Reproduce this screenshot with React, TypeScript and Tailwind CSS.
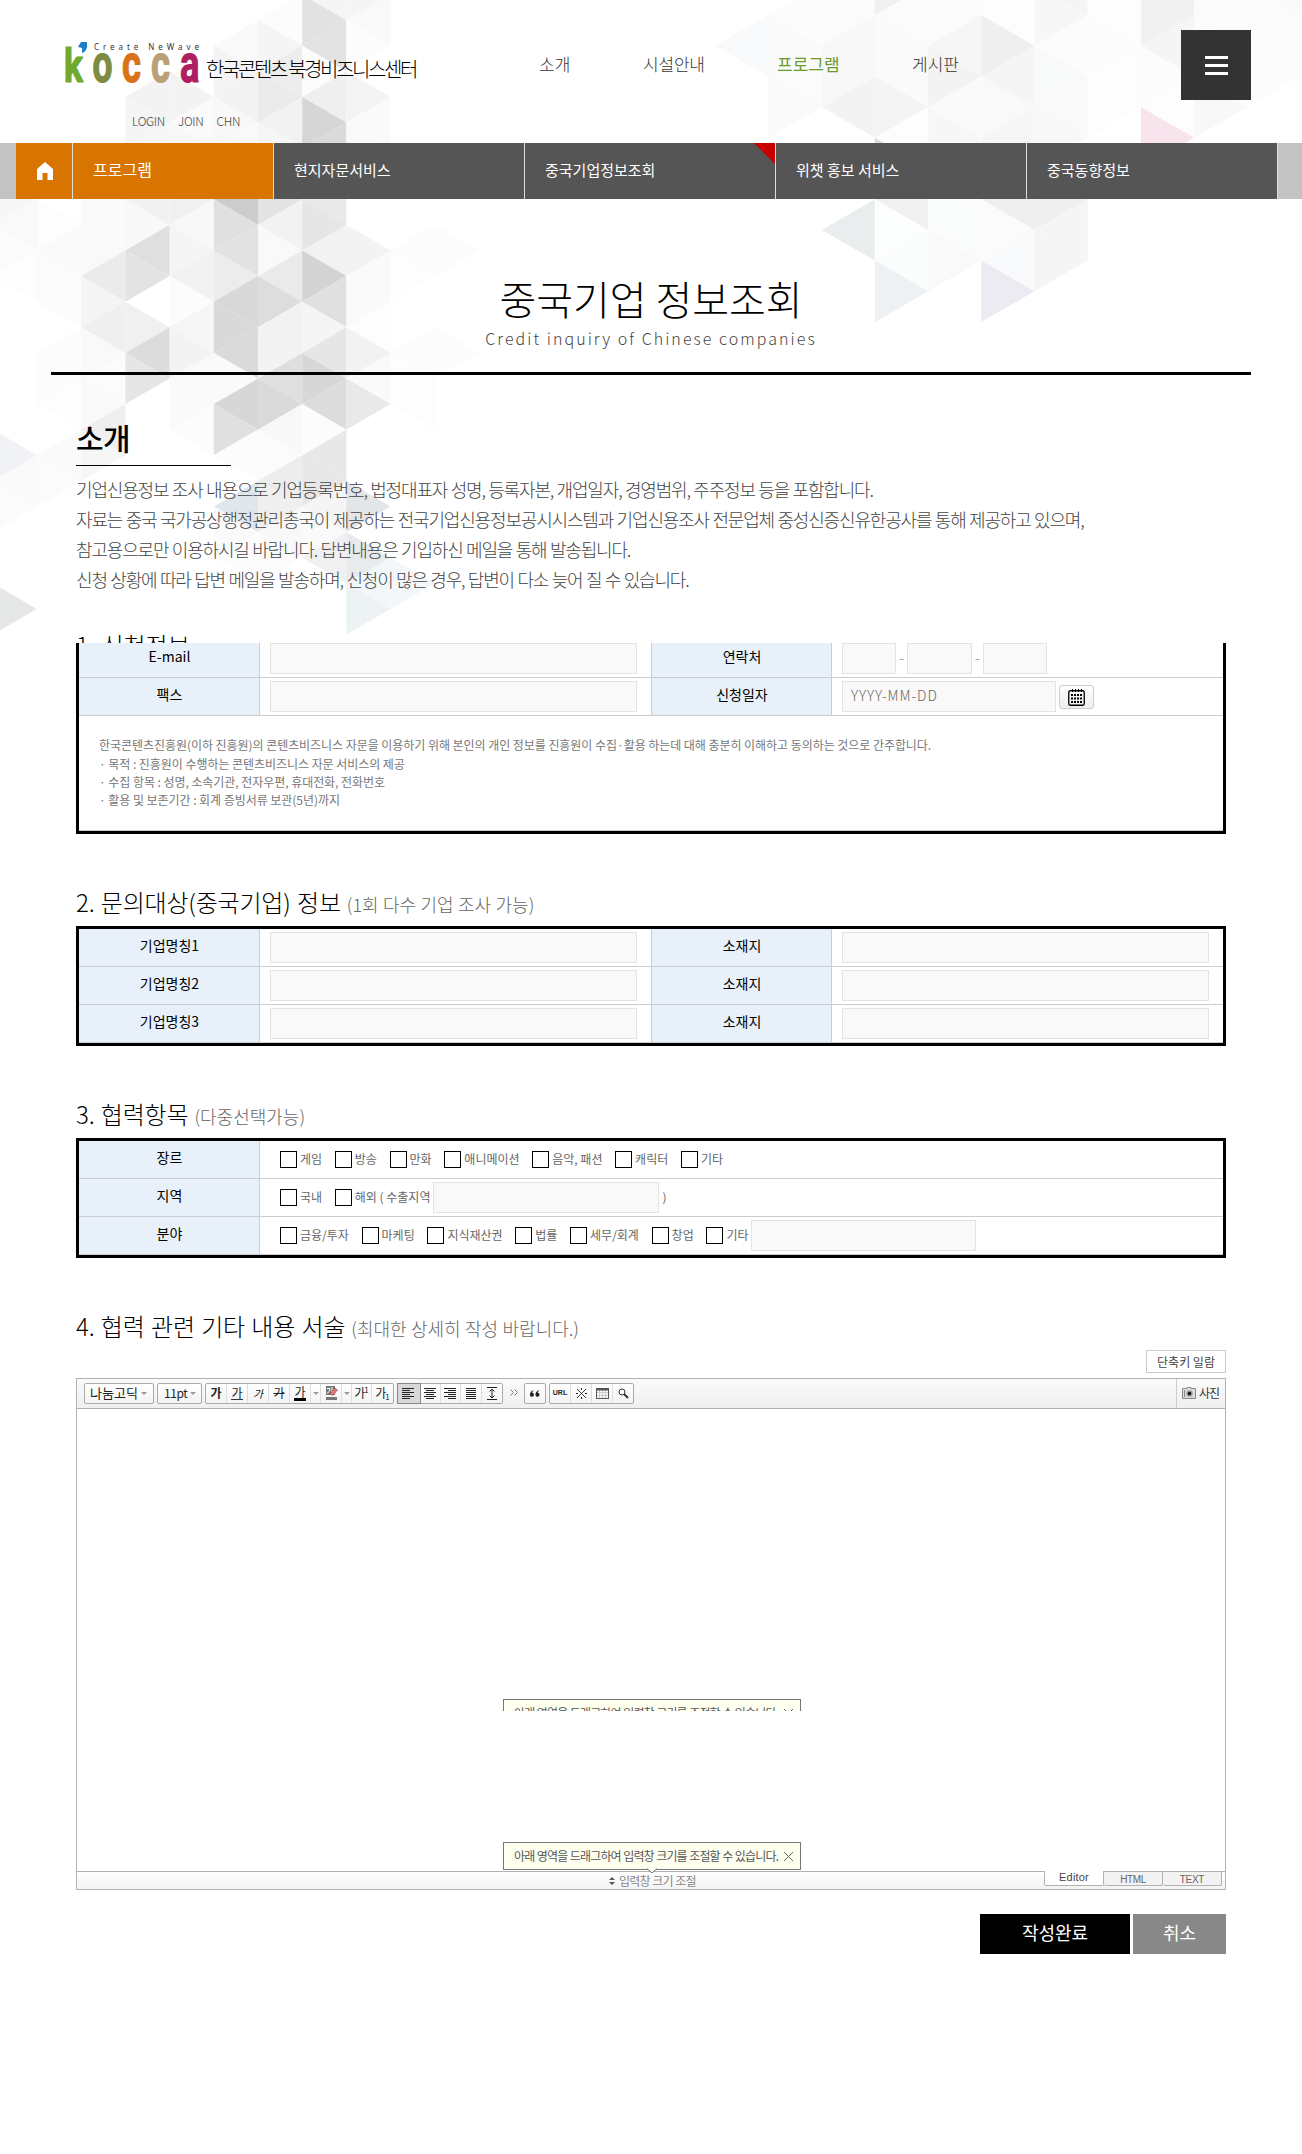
import React from "react";

type Tones = Record<number, Record<number, string>>;

const leftTones: Tones = {
  [-1]: { 6: "#f7f7f7", 7: "#f7f7f7", 8: "#f9f9f9", 9: "#fbfbfb", 10: "#fdfdfd", 17: "#f0f2f5", 18: "#fafafa", 19: "#fbfbfb", 23: "#e6e8e8" },
  0: { 8: "#fdfdfd", 9: "#fafafa", 10: "#fbfbfb", 11: "#fcfcfc", 13: "#fcfcfc", 14: "#fcfcfc", 15: "#fdfdfd", 17: "#fafafa", 18: "#fbfbfb" },
  1: { 7: "#f9f9f9", 8: "#fafafa", 9: "#f9f9f9", 10: "#ebebeb", 11: "#f4f4f4", 12: "#efefef", 13: "#f9f9f9", 14: "#fbfbfb", 15: "#f9f9f9", 16: "#efefef", 17: "#f6f6f6" },
  2: { 3: "#f3f3f3", 4: "#f5f5f5", 5: "#f7f7f7", 6: "#f4f4f4", 7: "#f1f1f1", 8: "#f8f8f8", 9: "#dfdfdf", 10: "#e3e3e3", 12: "#f0f0f0", 13: "#dcdcdc", 14: "#e6e6e6" },
  3: { 3: "#f3f3f3", 4: "#fafafa", 5: "#f8f8f8", 6: "#f4f4f4", 7: "#f0f0f0", 8: "#f8f8f8", 9: "#f5f5f5", 10: "#f2f2f2", 11: "#fcfcfc", 12: "#f6f6f6", 13: "#f3f3f3", 14: "#f9f9f9", 15: "#fafafa", 16: "#fcfcfc" },
  4: { 1: "#fafafa", 2: "#f4f4f4", 3: "#f3f3f3", 4: "#f8f8f8", 5: "#fafafa", 6: "#e8e8e8", 7: "#cccccc", 8: "#e0e0e0", 9: "#e2e2e2", 10: "#ececec", 11: "#d8d8d8", 12: "#d9d9d9", 13: "#dadada", 14: "#fafafa", 15: "#d7d7d7", 16: "#e0e0e0", 17: "#fcfcfc", 19: "#dfe6ec", 20: "#fafafa", 21: "#fcfcfc" },
  5: { 0: "#fcfcfc", 1: "#f5f5f5", 2: "#ededed", 3: "#ebebeb", 4: "#f2f2f2", 5: "#f6f6f6", 6: "#f3f3f3", 7: "#e3e3e3", 8: "#f2f2f2", 9: "#f9f9f9", 10: "#eaeaea", 11: "#dddddd", 12: "#f2f2f2", 13: "#f3f3f3", 14: "#dfdfdf", 15: "#dadada", 16: "#f8f8f8", 17: "#fbfbfb", 18: "#ededed", 19: "#efefef", 20: "#f8f8f8", 21: "#fbfbfb" },
  6: { [-1]: "#f5f5f5", 0: "#e2e2e2", 1: "#e3e3e3", 2: "#fcfcfc", 3: "#efefef", 4: "#d6d6d6", 5: "#dadada", 6: "#d9d9d9", 7: "#e9e9e9", 8: "#e6e6e6", 9: "#f2f2f2", 10: "#d3d3d3", 11: "#e0e0e0", 12: "#f5f5f5", 13: "#e6e6e6", 14: "#d7d7d7", 15: "#dcdcdc", 16: "#fcfcfc", 17: "#e8e8e8", 18: "#e7e7e7", 19: "#f5f5f5", 20: "#fafafa", 21: "#f0f0f0" },
  7: { [-1]: "#f5f5f5", 0: "#f9f9f9", 1: "#fcfcfc", 3: "#f4f4f4", 4: "#fafafa", 5: "#f9f9f9", 9: "#f3f3f3", 10: "#fafafa", 11: "#fafafa", 12: "#fdfdfd", 13: "#f2f2f2", 14: "#fafafa", 15: "#e9e9e9", 19: "#e4e5e6", 21: "#e9eaeb", 22: "#f2f7fa", 23: "#edf2f5" },
  8: { 9: "#fcfcfc", 10: "#fdfdfd", 13: "#fcfcfc", 14: "#fdfdfd", 15: "#fdfdfd", 22: "#f1f7fb" },
  9: { 9: "#fcfcfc", 13: "#fcfcfc" },
};

const rightTones: Tones = {
  [-1]: { 1: "#f8fafc" },
  0: { 0: "#fcfcfc", 1: "#fafafa", 2: "#fbfbfb", 3: "#fafafa" },
  1: { [-1]: "#fcfcfc", 0: "#fbfbfb", 1: "#f8f8f8", 2: "#f8f8f8", 3: "#f3f3f3", 7: "#e9edee" },
  2: { [-1]: "#f0f0f0", 0: "#fbfbfb", 1: "#fafafa", 2: "#fafafa", 3: "#f4f4f4", 4: "#fdfdfd", 5: "#d4dde6", 6: "#f0f0f0", 7: "#fcfefe", 8: "#fbfdfd", 9: "#eef1f4" },
  3: { [-1]: "#fcfcfc", 0: "#fbfbfb", 1: "#f6f6f6", 2: "#f3f3f3", 3: "#fafafa", 4: "#f7f7f7", 5: "#f9f9f9", 6: "#fafdfc", 7: "#fafcfb", 8: "#f9f9f9" },
  4: { [-1]: "#fdfdfd", 0: "#fdfdfd", 1: "#efefef", 2: "#f5f5f5", 3: "#f8f9f8", 4: "#f6f6f6", 5: "#f5f5f5", 6: "#efefef", 7: "#fbfbfb", 8: "#f9fafc", 9: "#ecebf2" },
  5: { [-1]: "#f5f5f5", 0: "#f7f7f7", 1: "#fcfcfc", 2: "#f8f9f9", 3: "#f9f9f9", 4: "#f8f8f8", 6: "#efefef", 7: "#f5f5f5", 8: "#f5f5f5" },
  6: { [-1]: "#fdfdfd", 0: "#fdfdfd", 1: "#fcfcfc", 2: "#fdfdfd", 3: "#fdfdfd" },
  7: { [-1]: "#f1f1f1", 0: "#f1f1f1", 1: "#f5f5f5", 2: "#fcfcfc", 3: "#fdfdfd", 4: "#f7e4ec" },
  8: { [-1]: "#fbfbfb", 0: "#fbfbfb", 1: "#fcfcfc", 2: "#fcfcfc", 3: "#f8f8f8" },
  9: { [-1]: "#fafafa", 0: "#fbfbfb", 1: "#fcfcfc", 2: "#fcfcfc" },
};

function Lattice({ tones, x0, dx, y0, dy, odd }: { tones: Tones; x0: number; dx: number; y0: number; dy: number; odd: boolean }) {
  return (
    <>
      {Object.keys(tones).flatMap((ks) => {
        const k = Number(ks);
        return Object.keys(tones[k]).map((js) => {
          const j = Number(js);
          const even = Math.abs(k + j) % 2 === 0;
          const pointsRight = odd ? !even : even;
          const base = x0 + dx * (pointsRight ? k : k + 1);
          const apex = x0 + dx * (pointsRight ? k + 1 : k);
          const y = y0 + dy * j;
          return <polygon key={ks + "_" + js} points={`${base},${y - dy} ${base},${y + dy} ${apex},${y}`} fill={tones[k][j]} />;
        });
      })}
    </>
  );
}

function Backdrop() {
  return (
    <svg className="absolute left-0 top-0 -z-10" width="1302" height="660" viewBox="0 0 1302 660">
      <Lattice tones={leftTones} x0={37} dx={44.2} y0={20.1} dy={25.6} odd={false} />
      <Lattice tones={rightTones} x0={768.5} dx={53.2} y0={15} dy={30.7} odd={true} />
    </svg>
  );
}

function Logo() {
  const letters: [string, number, number, string, number][] = [
    ["k", -1, 19, "#6fa92e", 47],
    ["o", 27.5, 20, "#7c8c40", 53],
    ["c", 57, 19, "#d9731a", 53],
    ["c", 86, 19, "#b9a077", 53],
    ["a", 115, 19.5, "#b01e62", 53],
  ];
  return (
    <svg width="136" height="44" viewBox="0 0 136 44" className="shrink-0 overflow-visible">
      {letters.map(([t, x, w, c, s], i) => (
        <text key={i} x={x} y={40} textLength={w} lengthAdjust="spacingAndGlyphs" fill={c} stroke={c} strokeWidth="1.2" strokeLinejoin="round" fontSize={s} fontWeight="700" fontFamily="Roboto, sans-serif">
          {t}
        </text>
      ))}
      <path d="M16 0H22V5Q21 10 17 11L17 6L13 5Z" fill="#1f7fc4" />
      <text x="29" y="8" fontSize="8" textLength="105" fill="#333" fontWeight="400" fontFamily="Noto Sans, sans-serif">
        Create NeWave
      </text>
    </svg>
  );
}

function Header() {
  return (
    <header className="flex h-[143px] items-start">
      <div className="ml-[65px] w-[474px] pt-[42px]">
        <div className="flex h-[44px] items-start">
          <Logo />
          <span className="ml-[5px] mt-[13px] whitespace-nowrap text-[20px] leading-[28px] tracking-[-2.4px] text-black">한국콘텐츠 북경비즈니스센터</span>
        </div>
        <div className="ml-[67px] mt-[26px] flex gap-[13px] text-[12px] leading-[18px] tracking-[-0.3px] text-[#444]">
          <span>LOGIN</span>
          <span>JOIN</span>
          <span>CHN</span>
        </div>
      </div>
      <nav className="flex pt-[51px] text-[17px] leading-[26px] text-[#333]">
        <span className="w-[104px]">소개</span>
        <span className="w-[134px] tracking-[-0.2px]">시설안내</span>
        <span className="w-[135px] font-normal text-[#6a9c2c]">프로그램</span>
        <span>게시판</span>
      </nav>
      <button className="ml-auto mr-[51px] mt-[30px] flex h-[70px] w-[70px] flex-col items-center gap-[5px] bg-[#333] pt-[26px]">
        <i className="h-[3px] w-[23px] bg-white" />
        <i className="h-[3px] w-[23px] bg-white" />
        <i className="h-[3px] w-[23px] bg-white" />
      </button>
    </header>
  );
}

function SubNav() {
  const items = ["현지자문서비스", "중국기업정보조회", "위챗 홍보 서비스", "중국동향정보"];
  return (
    <div className="flex h-[56px] bg-[#c3c3c3] text-[15px] font-normal leading-[53px] text-white">
      <div className="ml-[16px] flex w-[57px] items-center justify-end border-r border-[#ddd] bg-[#d87500] pr-[19px]">
        <svg width="16" height="18" viewBox="0 0 16 18" className="shrink-0">
          <path d="M8 0L16 7V18H10.5V11H5.5V18H0V7Z" fill="#fff" />
        </svg>
      </div>
      <div className="w-[201px] border-r border-[#ddd] bg-[#d87500] pl-[20px] text-[16px]">프로그램</div>
      {items.map((t, i) => (
        <div key={t} className="relative w-[251px] border-r border-[#ddd] bg-[#555] pl-[20px]">
          {t}
          {i === 1 && <i className="absolute right-0 top-0 h-[21px] w-[21px] bg-[#c80000] [clip-path:polygon(0_0,100%_0,100%_100%)]" />}
        </div>
      ))}
    </div>
  );
}

const field = "border border-[#e3e3e3] bg-[#f9f9f9]";
const label = "flex items-center justify-center bg-[#e8f1f9] pl-px text-[14px] font-normal text-black";

function PairRow({ left, right, children, clipped }: { left: string; right: string; children: React.ReactNode; clipped?: boolean }) {
  return (
    <div className={`flex border-b border-[#ccc] ${clipped ? "h-[35px]" : "h-[38px]"}`}>
      <div className={`${label} w-[180px] ${clipped ? "pb-[7px]" : "pb-[4px]"}`}>{left}</div>
      <div className={`w-[393px] border-x border-[#ccc] pl-[10px] ${clipped ? "" : "pt-[3px]"}`}>
        <div className={`h-[31px] w-[367px] ${field}`} />
      </div>
      <div className={`${label} w-[179px] ${clipped ? "pb-[7px]" : "pb-[4px]"}`}>{right}</div>
      <div className={`flex flex-1 items-start border-l border-[#ccc] pl-[10px] ${clipped ? "" : "pt-[3px]"}`}>{children}</div>
    </div>
  );
}

function Heading({ title, note }: { title: string; note: string }) {
  return (
    <h3 className="flex h-[34px] items-baseline gap-[6px] whitespace-nowrap text-[24px] leading-[34px] tracking-[-0.2px] text-black [word-spacing:1.3px]">
      {title} <span className="text-[18px] tracking-normal text-[#666] [word-spacing:0.4px]">{note}</span>
    </h3>
  );
}

function Check({ text }: { text: string }) {
  return (
    <label className="mr-[12.7px] flex items-center gap-[3px] whitespace-nowrap">
      <i className="h-[17px] w-[17px] border border-black bg-white" />
      <span className="-mt-[2px]">{text}</span>
    </label>
  );
}

function CheckRow({ name, children }: { name: string; children: React.ReactNode }) {
  return (
    <div className="flex h-[38px] border-b border-[#ccc]">
      <div className={`${label} w-[180px] pb-[4px]`}>{name}</div>
      <div className="flex flex-1 items-center border-l border-[#ccc] pl-[20px] text-[12px] font-normal text-[#666]">{children}</div>
    </div>
  );
}

function CalendarIcon() {
  return (
    <svg width="17" height="17" viewBox="0 0 17 17">
      <rect x="0.75" y="1.75" width="15.5" height="14.5" rx="1.5" fill="none" stroke="#000" strokeWidth="1.3" />
      <path d="M4.500 0V3M7.500 0V3M10.500 0V3M13.500 0V3" stroke="#000" />
      <path d="M3 6H14M3 9.500H14M3 13H14" stroke="#000" strokeWidth="2" strokeDasharray="2 1" />
    </svg>
  );
}

const group = "flex h-[21px] rounded-[2px] border border-[#aaa] bg-gradient-to-b from-white to-[#f4f4f4] text-[12px] font-normal leading-[18px] text-[#222]";

function Cell({ w, children, last, on }: { w: number; children: React.ReactNode; last?: boolean; on?: boolean }) {
  return (
    <div style={{ width: w }} className={`flex items-center justify-center ${last ? "" : "border-r border-[#ddd]"} ${on ? "bg-[#d8d8d8] outline outline-1 outline-[#888]" : ""}`}>
      {children}
    </div>
  );
}

const Caret = () => <i className="border-x-[3px] border-t-[3px] border-x-transparent border-t-[#999]" />;

function Lines({ rows }: { rows: [number, number][] }) {
  return (
    <svg width="12" height="13" viewBox="0 0 12 13">
      {rows.map(([x, w], i) => (
        <rect key={i} x={x} y={1 + i * 2} width={w} height="1" fill="#222" />
      ))}
    </svg>
  );
}

function Toolbar() {
  return (
    <div className="flex h-[30px] items-center border-b border-[#b2b2b2] bg-gradient-to-b from-[#fafafa] to-[#f0f0f0] pb-[1px] pl-[7px]">
      <div className={`${group} w-[70px] items-center pl-[5px]`}>
        <span className="w-[51px] text-[13px]">나눔고딕</span>
        <Caret />
      </div>
      <div className={`${group} ml-[3px] w-[45px] items-center pl-[6px]`}>
        <span className="w-[26px] text-[12px] tracking-[-0.4px]">11pt</span>
        <Caret />
      </div>
      <div className={`${group} ml-[3px] w-[189px]`}>
        <Cell w={21}><b>가</b></Cell>
        <Cell w={21}><span className="border-b border-[#333] leading-[13px]">가</span></Cell>
        <Cell w={21}><span className="text-[11px] italic">가</span></Cell>
        <Cell w={21}><span className="line-through">가</span></Cell>
        <Cell w={21}><span className="border-b-[3px] border-black leading-[12px]">가</span></Cell>
        <Cell w={10}><Caret /></Cell>
        <Cell w={21}>
          <svg width="13" height="14" viewBox="0 0 13 14">
            <rect width="9" height="9" x="1" fill="#777" />
            <path d="M2 2.5H5Q5 6 2 7.5M7 1V8" stroke="#fff" fill="none" />
            <path d="M5 8L10 2L12.500 4L8 9.500Z" fill="#e07878" stroke="#a33" strokeWidth=".5" />
            <rect x="1" y="11" width="11" height="3" fill="#777" />
          </svg>
        </Cell>
        <Cell w={10}><Caret /></Cell>
        <Cell w={20}>가<span className="-ml-px -mt-[7px] text-[8px]">1</span></Cell>
        <Cell w={21} last>가<span className="-ml-px mt-[7px] text-[8px]">1</span></Cell>
      </div>
      <div className={`${group} ml-[3px] w-[106px]`}>
        <Cell w={22} on><Lines rows={[[0, 12], [0, 8], [0, 12], [0, 8], [0, 12], [0, 8]]} /></Cell>
        <Cell w={21}><Lines rows={[[0, 12], [2, 8], [0, 12], [2, 8], [0, 12], [2, 8]]} /></Cell>
        <Cell w={21}><Lines rows={[[0, 12], [4, 8], [0, 12], [4, 8], [0, 12], [4, 8]]} /></Cell>
        <Cell w={21}><Lines rows={[[1, 10], [1, 10], [1, 10], [1, 10], [1, 10], [1, 10]]} /></Cell>
        <Cell w={20} last>
          <svg width="10" height="13" viewBox="0 0 10 13" fill="none" stroke="#222">
            <path d="M0 .5H10M0 12.500H10M5 2V11M2.500 4.500L5 2L7.500 4.500M2.500 8.500L5 11L7.500 8.500" />
          </svg>
        </Cell>
      </div>
      <svg width="8" height="7" viewBox="0 0 8 7" fill="none" stroke="#777" className="ml-[7px] mr-[6px] -mt-px">
        <path d="M.5 .5L3.500 3.500L.5 6.500M4.500 .5L7.500 3.500L4.500 6.500" />
      </svg>
      <div className={`${group} w-[22px]`}>
        <Cell w={20} last>
          <svg width="10" height="7" viewBox="0 0 10 7" fill="#222">
            <path d="M4 0Q0 1 0 4.500A2 2 0 1 0 2.200 2.800Q2.500 1.200 4 0ZM9.500 0Q5.500 1 5.500 4.500A2 2 0 1 0 7.700 2.800Q8 1.200 9.500 0Z" />
          </svg>
        </Cell>
      </div>
      <div className={`${group} ml-[3px] w-[85px]`}>
        <Cell w={21}><span className="font-['Liberation_Sans'] text-[7px] font-bold">URL</span></Cell>
        <Cell w={21}>
          <svg width="11" height="11" viewBox="0 0 11 11" stroke="#222" fill="#222">
            <path d="M1 1L10 10M10 1L1 10" strokeWidth=".9" />
            <path d="M5 0H6V2H5ZM5 9H6V11H5ZM0 5H2V6H0ZM9 5H11V6H9Z" stroke="none" />
          </svg>
        </Cell>
        <Cell w={21}>
          <svg width="13" height="11" viewBox="0 0 13 11" fill="none">
            <path d="M.5 4.500H12.500M.5 7.500H12.500M3.500 2V11M6.500 2V11M9.500 2V11" stroke="#ccc" />
            <rect x=".5" y=".5" width="12" height="10" stroke="#555" />
            <rect width="13" height="2.500" fill="#555" />
          </svg>
        </Cell>
        <Cell w={20} last>
          <svg width="11" height="11" viewBox="0 0 11 11" fill="none" stroke="#333">
            <circle cx="4" cy="4" r="3" />
            <path d="M6 6L10 10" strokeWidth="2" />
          </svg>
        </Cell>
      </div>
      <div className="ml-auto flex h-[29px] w-[49px] items-center border-l border-[#ccc] pl-[5px] text-[12px] font-normal tracking-[-1px] text-[#333]">
        <svg width="14" height="12" viewBox="0 0 14 12" className="mr-[3px] shrink-0">
          <path d="M1 1.500H5V0.500H9V1.500H13.500V11.500H.5V1.500Z" fill="#ddd" stroke="#888" />
          <circle cx="7.500" cy="6.500" r="3.200" fill="#999" />
          <circle cx="7.500" cy="6.500" r="1.700" fill="#111" />
          <path d="M2.500 3V10" stroke="#888" />
        </svg>
        사진
      </div>
    </div>
  );
}

function Tip() {
  return (
    <div className="flex h-[28px] w-[298px] items-center border border-[#777] bg-[#fffff0] pl-[10px] text-[12px] font-normal tracking-[-0.85px] text-[#555] [word-spacing:0.6px]">
      <span className="w-[270px] whitespace-nowrap">아래 영역을 드래그하여 입력창 크기를 조절할 수 있습니다.</span>
      <svg width="9" height="9" viewBox="0 0 9 9" stroke="#666">
        <path d="M0 0L9 9M9 0L0 9" />
      </svg>
    </div>
  );
}

function Editor() {
  return (
    <div className="relative flex h-[512px] flex-col border border-[#b2b2b2] bg-white">
      <Toolbar />
      <div className="flex-1 pl-[426px]">
        <div className="mt-[290px] h-[12px] overflow-hidden">
          <Tip />
        </div>
        <div className="mt-[131px]">
          <Tip />
        </div>
      </div>
      <div className="relative flex h-[18px] border-t border-[#b2b2b2] bg-gradient-to-b from-white to-[#f3f3f3]">
        <svg className="absolute left-[569px] top-[-4px]" width="12" height="6" viewBox="0 0 12 6">
          <path d="M1 0.500L6 5L11 0.500" fill="#fffff0" stroke="#777" />
          <path d="M2 0H10" stroke="#fffff0" strokeWidth="1.500" />
        </svg>
        <div className="flex w-[967px] items-center pl-[532px] text-[12px] font-normal leading-[16px] tracking-[-0.8px] text-[#888] [word-spacing:0.6px]">
          <svg width="6" height="8" viewBox="0 0 6 8" className="mr-[4px]">
            <path d="M3 0L6 3H0ZM3 8L0 5H6Z" fill="#555" />
          </svg>
          <span className="pt-[1px]">입력창 크기 조절</span>
        </div>
        <div className="-mt-px flex h-[15px] text-center font-['Liberation_Sans'] text-[10px] font-normal leading-[15px] text-[#666]">
          <span className="w-[60px] rounded-b-[2px] border border-t-0 border-[#b2b2b2] bg-white text-[11px] leading-[13px] tracking-[0.2px] text-[#444]">Editor</span>
          <span className="w-[59px] rounded-b-[2px] border border-l-0 border-[#b2b2b2] bg-[#f2f2f2] tracking-[-0.4px]">HTML</span>
          <span className="w-[59px] rounded-b-[2px] border border-l-0 border-[#b2b2b2] bg-[#f2f2f2] tracking-[-0.3px]">TEXT</span>
        </div>
      </div>
    </div>
  );
}

const intro = [
  "기업신용정보 조사 내용으로 기업등록번호, 법정대표자 성명, 등록자본, 개업일자, 경영범위, 주주정보 등을 포함합니다.",
  "자료는 중국 국가공상행정관리총국이 제공하는 전국기업신용정보공시시스템과 기업신용조사 전문업체 중성신증신유한공사를 통해 제공하고 있으며,",
  "참고용으로만 이용하시길 바랍니다. 답변내용은 기입하신 메일을 통해 발송됩니다.",
  "신청 상황에 따라 답변 메일을 발송하며, 신청이 많은 경우, 답변이 다소 늦어 질 수 있습니다.",
];

export default function App() {
  return (
    <div className="relative isolate h-[2154px] w-[1302px] overflow-hidden bg-white font-['Noto_Sans_CJK_KR',sans-serif] font-light">
      <Backdrop />
      <Header />
      <SubNav />

      <div className="mx-[51px] h-[176px] border-b-[3px] border-black pt-[69px] text-center">
        <h1 className="text-[40px] leading-[60px] text-black">중국기업 정보조회</h1>
        <p className="text-[16px] leading-[20px] tracking-[2.05px] text-[#444]">Credit inquiry of Chinese companies</p>
      </div>

      <main className="ml-[76px] w-[1150px]">
        <h2 className="mt-[39px] h-[52px] w-[155px] border-b border-black text-[30px] font-medium leading-[46px] tracking-[-0.5px] text-black">소개</h2>
        <div className="mt-[8px] whitespace-nowrap text-[18px] leading-[30px] tracking-[-1.17px] text-[#444] [word-spacing:0.66px]">
          {intro.map((t) => (
            <p key={t}>{t}</p>
          ))}
        </div>

        <div className="mt-[34px] h-[15px] overflow-hidden">
          <h3 className="text-[24px] leading-[34px] text-black [word-spacing:1.3px]">1. 신청정보</h3>
        </div>
        <section className="h-[191px] border-[3px] border-t-0 border-black bg-white">
          <PairRow left="E-mail" right="연락처" clipped>
            <div className={`h-[31px] w-[54px] ${field}`} />
            <span className="w-[11px] text-center leading-[29px] text-[#999]">-</span>
            <div className={`h-[31px] w-[65px] ${field}`} />
            <span className="w-[11px] text-center leading-[29px] text-[#999]">-</span>
            <div className={`h-[31px] w-[64px] ${field}`} />
          </PairRow>
          <PairRow left="팩스" right="신청일자">
            <div className={`h-[31px] w-[214px] pl-[8px] text-[14px] leading-[27px] tracking-[0.95px] text-[#666] ${field}`}>YYYY-MM-DD</div>
            <button className="ml-[3px] mt-[4px] flex h-[24px] w-[35px] items-center justify-center rounded-[3px] border border-[#ccc] bg-gradient-to-b from-white to-[#eee]">
              <CalendarIcon />
            </button>
          </PairRow>
          <div className="h-[115px] whitespace-nowrap border-b border-[#ccc] pl-[20px] pt-[20px] text-[12px] font-normal leading-[18px] tracking-[-0.05px] text-[#777]">
            <p className="mb-[1px]">한국콘텐츠진흥원(이하 진흥원)의 콘텐츠비즈니스 자문을 이용하기 위해 본인의 개인 정보를 진흥원이 수집·활용 하는데 대해 충분히 이해하고 동의하는 것으로 간주합니다.</p>
            <p>· 목적 : 진흥원이 수행하는 콘텐츠비즈니스 자문 서비스의 제공</p>
            <p>· 수집 항목 : 성명, 소속기관, 전자우편, 휴대전화, 전화번호</p>
            <p>· 활용 및 보존기간 : 회계 증빙서류 보관(5년)까지</p>
          </div>
        </section>

        <div className="mt-[51px]">
          <Heading title="2. 문의대상(중국기업) 정보" note="(1회 다수 기업 조사 가능)" />
        </div>
        <section className="mt-[7px] border-[3px] border-black bg-white">
          {[1, 2, 3].map((n) => (
            <PairRow key={n} left={`기업명칭${n}`} right="소재지">
              <div className={`h-[31px] w-[367px] ${field}`} />
            </PairRow>
          ))}
        </section>

        <div className="mt-[51px]">
          <Heading title="3. 협력항목" note="(다중선택가능)" />
        </div>
        <section className="mt-[7px] border-[3px] border-black bg-white">
          <CheckRow name="장르">
            {["게임", "방송", "만화", "애니메이션", "음악, 패션", "캐릭터", "기타"].map((t) => (
              <Check key={t} text={t} />
            ))}
          </CheckRow>
          <CheckRow name="지역">
            <Check text="국내" />
            <Check text="해외 ( 수출지역" />
            <div className={`-ml-[9.7px] mr-[3px] h-[31px] w-[226px] ${field}`} />
            <span className="-mt-[2px]">)</span>
          </CheckRow>
          <CheckRow name="분야">
            {["금융/투자", "마케팅", "지식재산권", "법률", "세무/회계", "창업", "기타"].map((t) => (
              <Check key={t} text={t} />
            ))}
            <div className={`-ml-[9.7px] h-[31px] w-[225px] ${field}`} />
          </CheckRow>
        </section>

        <div className="mt-[51px]">
          <Heading title="4. 협력 관련 기타 내용 서술" note="(최대한 상세히 작성 바랍니다.)" />
        </div>
        <div className="mt-[7px] flex justify-end">
          <button className="h-[23px] w-[80px] border border-[#ccc] bg-white text-[12px] font-normal leading-[18px] text-[#444]">단축키 일람</button>
        </div>
        <div className="mt-[5px]">
          <Editor />
        </div>
        <div className="mt-[24px] flex justify-end gap-[3px] text-[18px] font-normal leading-[37px] text-white">
          <button className="flex h-[40px] w-[150px] justify-center bg-black">작성완료</button>
          <button className="flex h-[40px] w-[93px] justify-center bg-[#888]">취소</button>
        </div>
      </main>
    </div>
  );
}
